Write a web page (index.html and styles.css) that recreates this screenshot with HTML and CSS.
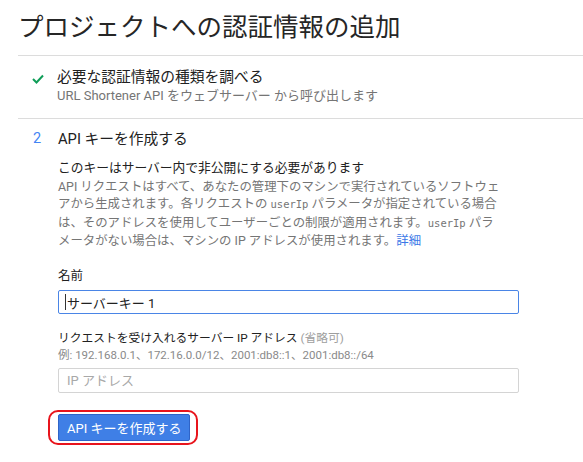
FILE: index.html
```html
<!DOCTYPE html>
<html lang="ja">
<head>
    <meta charset="UTF-8">
    <meta name="viewport" content="width=device-width, initial-scale=1.0">
    <title>認証情報の追加</title>
    <link rel="stylesheet" href="styles.css">
</head>
<body>
    <div class="page">
        <h1 class="pageTitle">プロジェクトへの認証情報の追加</h1>

        <div class="step done">
            <div class="marker">
                <svg class="check" width="12" height="10" viewBox="0 0 12 10">
                    <polyline points="1,5 4.5,8.5 11,1.5" fill="none" stroke="#0f9d58" stroke-width="2"/>
                </svg>
            </div>
            <div class="stepBody">
                <div class="stepTitle">必要な認証情報の種類を調べる</div>
                <div class="stepSub">URL Shortener API をウェブサーバー から呼び出します</div>
            </div>
        </div>

        <div class="step current">
            <div class="marker num">2</div>
            <div class="stepBody">
                <div class="stepTitle">API キーを作成する</div>

                <p class="noteHead">このキーはサーバー内で非公開にする必要があります</p>
                <p class="note">API リクエストはすべて、あなたの管理下のマシンで実行されているソフトウェ<br>アから生成されます。各リクエストの <code>userIp</code> パラメータが指定されている場合<br>は、そのアドレスを使用してユーザーごとの制限が適用されます。<code>userIp</code> パラ<br>メータがない場合は、マシンの IP アドレスが使用されます。<a href="#">詳細</a></p>

                <label class="fieldLabel" for="keyName">名前</label>
                <div class="fieldWrap">
                    <span class="caret"></span>
                    <input class="field focused" type="text" id="keyName" value="サーバーキー 1">
                </div>

                <label class="fieldLabel second" for="ipAddr">リクエストを受け入れるサーバー IP アドレス <span class="optional">(省略可)</span></label>
                <div class="hint">例: 192.168.0.1、172.16.0.0/12、2001:db8::1、2001:db8::/64</div>
                <input class="field" type="text" id="ipAddr" placeholder="IP アドレス">

                <div class="highlight">
                    <button class="createBtn" type="button">API キーを作成する</button>
                </div>
            </div>
        </div>
    </div>
</body>
</html>
```

FILE: styles.css
```css
body{
    margin: 0;
    padding: 0;
    background: #fff;
    color: #212121;
    font-family: Roboto, "Noto Sans CJK JP", sans-serif;
}

.page{
    padding-left: 18px;
}

.pageTitle{
    margin: 0;
    padding: 10px 0 11px;
    font-size: 25.5px;
    line-height: 34px;
    font-weight: 400;
    color: #262626;
    border-bottom: 1px solid #dcdcdc;
}

.step{
    display: flex;
    padding-left: 14px;
}

.step.done{
    padding-top: 11px;
    padding-bottom: 14px;
    border-bottom: 1px solid #dcdcdc;
}

.step.current{
    padding-top: 10px;
}

.marker{
    width: 25px;
    flex-shrink: 0;
    line-height: 20px;
}

.check{
    display: block;
    margin-top: 7px;
}

.num{
    color: #4285f4;
    font-size: 14.5px;
    padding-left: 1px;
}

.stepTitle{
    font-size: 14.75px;
    line-height: 20px;
}

.stepSub{
    font-size: 13px;
    line-height: 17px;
    color: #757575;
}

.noteHead{
    margin: 10px 0 0;
    font-size: 12.75px;
    line-height: 17px;
}

.note{
    margin: 2px 0 0;
    font-size: 12.4px;
    line-height: 17.3px;
    color: #757575;
    white-space: nowrap;
}

.note code{
    font-family: "DejaVu Sans Mono", monospace;
    font-size: 10.5px;
}

.note a{
    color: #3b78e7;
    text-decoration: none;
}

.fieldLabel{
    display: block;
    margin-top: 18px;
    font-size: 12.5px;
    line-height: 17px;
}

.fieldLabel.second{
    margin-top: 16px;
    font-size: 11.75px;
}

.optional{
    color: #9e9e9e;
}

.hint{
    font-size: 11.5px;
    line-height: 16px;
    color: #8a8a8a;
}

.fieldWrap{
    position: relative;
    padding-top: 6px;
}

/* text cursor seen in the focused field */
.caret{
    position: absolute;
    left: 7px;
    top: 10px;
    width: 1px;
    height: 16px;
    background: #333;
}

.field{
    display: block;
    box-sizing: border-box;
    width: 461px;
    height: 24px;
    margin: 6px 0 0;
    padding: 0 7px 0 8px;
    border: 1px solid #d4d4d4;
    border-radius: 2px;
    font-family: Roboto, "Noto Sans CJK JP", sans-serif;
    font-size: 13px;
    color: #212121;
    outline: none;
}

.fieldWrap .field{
    margin-top: 0;
}

.field.focused{
    border-color: #4a85e6;
}

.field::placeholder{
    color: #a8a8a8;
}

#ipAddr{
    margin-top: 5px;
    height: 25px;
}

/* red annotation drawn round the button */
.highlight{
    display: inline-block;
    margin: 17px 0 0 -10px;
    padding: 2px 6px 2px 8px;
    border: 2px solid #e8141c;
    border-radius: 10px;
}

.createBtn{
    display: block;
    height: 27px;
    padding: 0 8px;
    background: #3f7fe6;
    border: 1px solid #2f64c8;
    border-radius: 2px;
    color: #fff;
    font-family: Roboto, "Noto Sans CJK JP", sans-serif;
    font-size: 13px;
}
```
